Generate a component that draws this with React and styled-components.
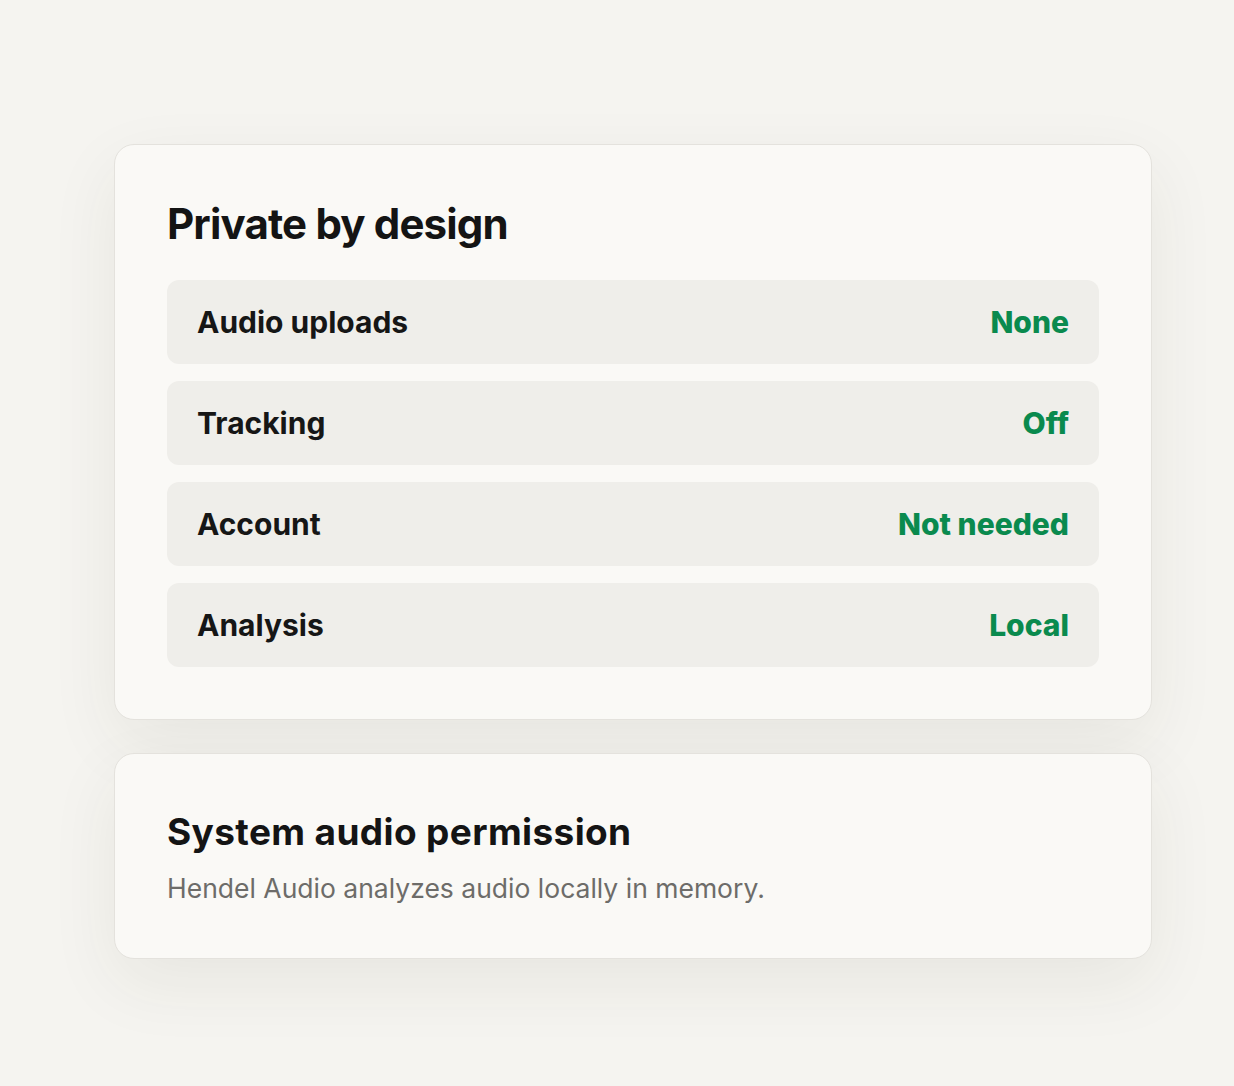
import React from 'react'
import styled, { createGlobalStyle } from 'styled-components'

const GlobalStyle = createGlobalStyle`
  html, body {
    margin: 0;
    padding: 0;
    background: #f5f4f0;
  }
  body {
    font-family: Inter, "Noto Sans", "Liberation Sans", sans-serif;
    color: #161616;
    -webkit-font-smoothing: antialiased;
  }
`

const Page = styled.main`
  min-height: 1086px;
  box-sizing: border-box;
  padding: 144px 0 0 114px;
  display: flex;
  flex-direction: column;
  gap: 33px;
`

const Card = styled.section`
  width: 1038px;
  box-sizing: border-box;
  background: #faf9f6;
  border: 1px solid #e4e2dd;
  border-radius: 20px;
  padding: 52px;
  box-shadow: 0 24px 70px rgba(60, 50, 30, 0.07);
`

const Title = styled.h2`
  margin: 0 0 ${(p) => p.$gap || 0}px;
  font-size: ${(p) => p.$size}px;
  line-height: ${(p) => p.$lh}px;
  font-weight: 700;
  letter-spacing: ${(p) => p.$track || 0}em;
  color: #141414;
`

const List = styled.div`
  display: flex;
  flex-direction: column;
  gap: 17px;
`

const Row = styled.div`
  height: 84px;
  box-sizing: border-box;
  padding: 0 30px;
  display: flex;
  align-items: center;
  justify-content: space-between;
  background: #efeeea;
  border-radius: 12px;
  font-size: 30px;
`

const Label = styled.span`
  font-weight: 700;
  color: #161616;
`

const Value = styled.span`
  font-weight: 800;
  color: #0a8a4e;
`

const Description = styled.p`
  margin: 0;
  font-size: 26.5px;
  line-height: 35px;
  color: #6d6c69;
`

const rows = [
  ['Audio uploads', 'None'],
  ['Tracking', 'Off'],
  ['Account', 'Not needed'],
  ['Analysis', 'Local'],
]

export default function App() {
  return (
    <>
      <GlobalStyle />
      <Page>
        <Card>
          <Title $size={42} $lh={53} $gap={30} $track={-0.02}>Private by design</Title>
          <List>
            {rows.map(([label, value]) => (
              <Row key={label}>
                <Label>{label}</Label>
                <Value>{value}</Value>
              </Row>
            ))}
          </List>
        </Card>
        <Card>
          <Title $size={37} $lh={52} $gap={13} $track={0.01}>System audio permission</Title>
          <Description>Hendel Audio analyzes audio locally in memory.</Description>
        </Card>
      </Page>
    </>
  )
}
